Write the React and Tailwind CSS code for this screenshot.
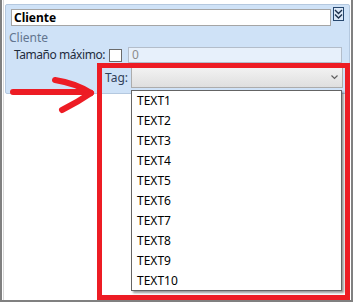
import React from "react";

const items = ["TEXT1", "TEXT2", "TEXT3", "TEXT4", "TEXT5", "TEXT6", "TEXT7", "TEXT8", "TEXT9", "TEXT10"];

const font = { fontFamily: '"Noto Sans", "Open Sans", sans-serif' };

const App = () => {
  return (
    <div className="relative w-[356px] h-[302px] bg-white overflow-hidden text-[12px]" style={font}>
      <div className="w-[353px] h-[302px] border-l-2 border-r-2 border-b-2 border-[#808080]">
        <div className="ml-px h-full border-l border-[#d8d8d8] pt-[4px] pl-px pr-px">
          {/* panel */}
          <div className="h-[90px] bg-[#cfe2f7] border border-[#b4c8df] rounded-[2px]">
            <div className="flex items-start mt-[4px] ml-[5px]">
              <div className="w-[320px] h-[17px] shrink-0 bg-white border border-[#a5a5a5] pl-[2px] leading-[15px] font-bold text-black">
                Cliente
              </div>
              <div className="ml-[2px] -mt-[2px] shrink-0">
                <svg width="11" height="14" viewBox="0 0 11 14">
                  <rect x="0.5" y="0.5" width="10" height="13" fill="#dbe8f7" stroke="#27476e" />
                  <polyline points="2,3 5.5,6.5 9,3" fill="none" stroke="#1c2f4a" strokeWidth="1.4" />
                  <polyline points="2,7.5 5.5,11 9,7.5" fill="none" stroke="#1c2f4a" strokeWidth="1.4" />
                </svg>
              </div>
            </div>
            <div className="mt-[4px] ml-[3px] leading-[16px] text-[#62758f]">Cliente</div>
            <div className="flex items-center mt-px ml-[8px] h-[16px]">
              <span className="w-[95px] shrink-0 whitespace-nowrap tracking-[-0.45px] text-[#1f2d3d] leading-[16px]">
                Tamaño máximo:
              </span>
              <span className="w-[13px] h-[13px] shrink-0 bg-white border border-[#6b6b6b]"></span>
              <div className="ml-[6px] w-[214px] h-[16px] shrink-0 bg-[#e7f0fb] border border-[#b3bdca] pl-[3px] leading-[14px] text-[#8c8c8c]">
                0
              </div>
            </div>
            <div className="flex items-center mt-[4px] ml-[99px] h-[21px]">
              <span className="w-[26px] shrink-0 text-[#2f4058]">Tag:</span>
              <div className="relative w-[212px] h-[21px] shrink-0 border border-[#acacac] bg-gradient-to-b from-[#f2f2f2] to-[#dfdfdf]">
                <svg className="absolute left-[199px] top-[7px]" width="7" height="5" viewBox="0 0 7 5">
                  <polyline points="0.5,0.5 3.5,3.5 6.5,0.5" fill="none" stroke="#606060" strokeWidth="1.2" />
                </svg>
              </div>
            </div>
          </div>
        </div>
      </div>

      {/* dropdown list */}
      <div className="absolute left-[131px] top-[90px] w-[211px] h-[201px] bg-white border border-[#646464] shadow-[2px_2px_2px_rgba(0,0,0,0.4)]">
        {items.map((item) => (
          <div key={item} className="h-[20px] leading-[20px] pl-[5px] text-black">
            {item}
          </div>
        ))}
      </div>

      {/* annotation */}
      <div className="absolute left-[97px] top-[63px] w-[253px] h-[237px] border-[5px] border-[#ed1c24]"></div>
      <svg className="absolute left-0 top-[60px]" width="110" height="60" viewBox="0 0 110 60">
        <g fill="none" stroke="#ed1c24" strokeWidth="6" strokeLinecap="round" strokeLinejoin="round">
          <line x1="13" y1="32" x2="86" y2="32" />
          <path d="M55 20 Q75 23 91 33" />
          <path d="M91 33 Q78 42 62 50" />
        </g>
      </svg>
    </div>
  );
};

export default App;
